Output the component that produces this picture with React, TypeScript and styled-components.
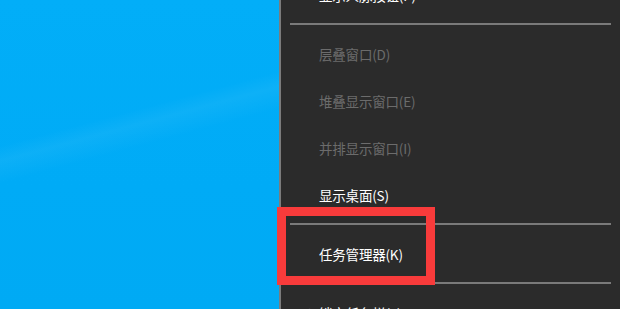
import React from "react";
import styled, { createGlobalStyle } from "styled-components";

const Global = createGlobalStyle`
  html, body { margin: 0; padding: 0; background: #2b2b2b; overflow: hidden; }
  #root { width: 620px; height: 309px; }
`;

const Screen = styled.div`
  position: relative;
  display: flex;
  width: 620px;
  height: 309px;
  overflow: hidden;
  font-family: "Noto Sans CJK SC", "Noto Sans", sans-serif;
`;

const Desktop = styled.div`
  width: 279px;
  flex: none;
  background:
    linear-gradient(165deg, rgba(255,255,255,0) 38%, rgba(255,255,255,0.05) 42%, rgba(255,255,255,0) 48%),
    linear-gradient(180deg, #02aef8 0%, #00abf6 60%, #00aaf4 100%);
`;

const Menu = styled.div`
  flex: 1;
  background: #2b2b2b;
  border-left: 2px solid #7c7c7c;
  display: flex;
  flex-direction: column;
  padding-top: 0;
`;

const List = styled.div`
  margin-top: -29px;
  display: flex;
  flex-direction: column;
`;

const Item = styled.div<{ $disabled?: boolean }>`
  height: 47px;
  flex: none;
  display: flex;
  align-items: center;
  padding-left: 38px;
  position: relative;
  font-size: 13.5px;
  letter-spacing: -0.2px;
  color: ${(p) => (p.$disabled ? "#6c6c6c" : "#ffffff")};
`;

const Check = styled.span`
  position: absolute;
  left: 21px;
  font-size: 12px;
  color: #ffffff;
`;

const Separator = styled.div`
  height: 12px;
  flex: none;
  display: flex;
  align-items: center;
  padding: 0 9px 0 9px;
  &::after {
    content: "";
    flex: 1;
    height: 2px;
    background: #7a7a7a;
  }
`;

const Highlight = styled.div`
  position: absolute;
  left: 277px;
  top: 207px;
  width: 158px;
  height: 78px;
  box-sizing: border-box;
  border: 9px solid #f83b3b;
  pointer-events: none;
`;

export default function App() {
  return (
    <>
      <Global />
      <Screen>
        <Desktop />
        <Menu>
          <List>
            <Item>显示人脉按钮(P)</Item>
            <Separator />
            <Item $disabled>层叠窗口(D)</Item>
            <Item $disabled>堆叠显示窗口(E)</Item>
            <Item $disabled>并排显示窗口(I)</Item>
            <Item>显示桌面(S)</Item>
            <Separator />
            <Item>任务管理器(K)</Item>
            <Separator />
            <Item>
              <Check>✓</Check>
              锁定任务栏(L)
            </Item>
          </List>
        </Menu>
        <Highlight />
      </Screen>
    </>
  );
}
